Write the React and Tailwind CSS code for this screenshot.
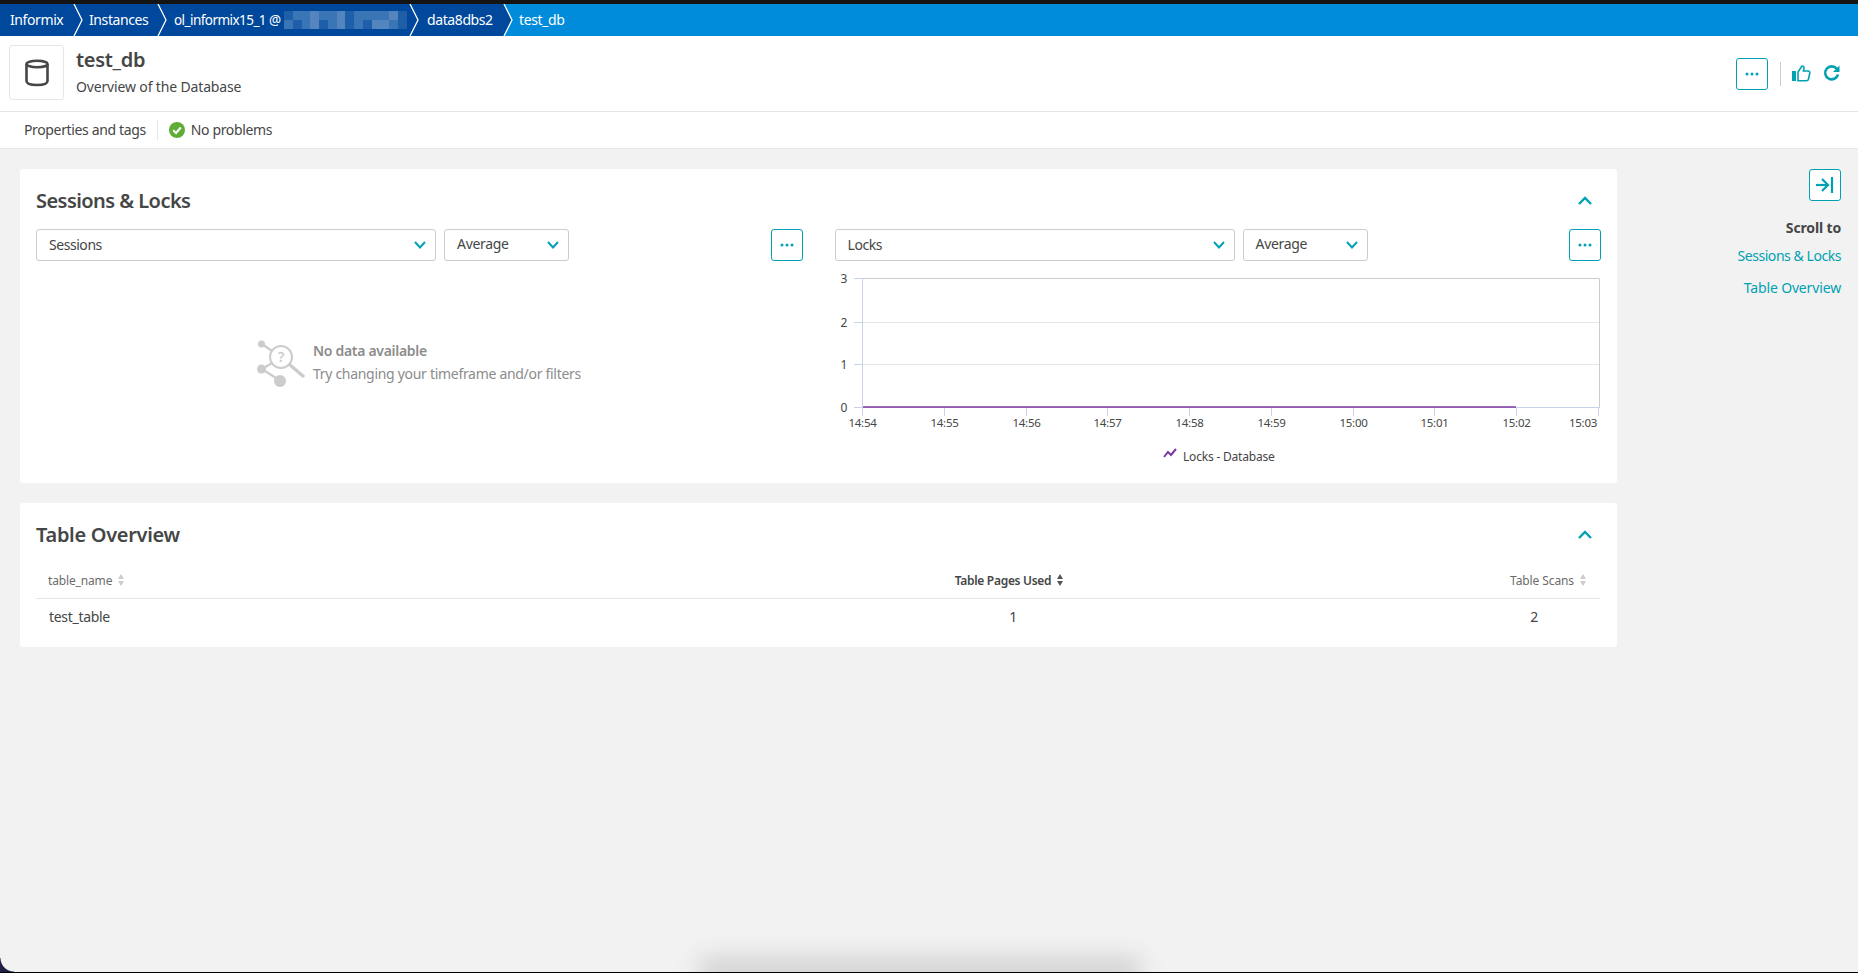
import React from "react";

const TEAL = "#00a1b2";

const D = "bg-[#1f5ea8]";
const M = "bg-[#3a75b6]";
const L = "bg-[#5485bf]";
const MASK = [
  D, M, M, L, M, M, L, D, M, M, M, M, L, D,
  M, D, M, L, D, M, L, D, M, D, L, L, M, D,
];

const Crumb = ({ children, next, width, pad }) => (
  <>
    <div className={`${width} ${pad} flex items-center text-white bg-[#00489b] shrink-0`}>{children}</div>
    <svg width="10" height="32" viewBox="0 0 10 32" className="shrink-0 block">
      <rect width="10" height="32" fill={next === "active" ? "#008cdb" : "#00489b"} />
      <polygon points="0,0 1,0 9,16 1,32 0,32" fill="#00489b" />
      <polyline points="1,0 9,16 1,32" fill="none" stroke="#fff" strokeWidth="1.3" />
    </svg>
  </>
);

const Dots = () => (
  <svg width="14" height="4" viewBox="0 0 14 4" fill={TEAL}>
    <circle cx="2" cy="2" r="1.5" />
    <circle cx="7" cy="2" r="1.5" />
    <circle cx="12" cy="2" r="1.5" />
  </svg>
);

const IconButton = ({ children }) => (
  <button className="w-8 h-8 shrink-0 flex items-center justify-center rounded-[3px] border border-[#00a1b2] bg-white">
    {children}
  </button>
);

const ChevronUp = () => (
  <svg width="14" height="9" viewBox="0 0 14 9" fill="none" stroke={TEAL} strokeWidth="2.4">
    <polyline points="1,8 7,2 13,8" />
  </svg>
);

const Select = ({ label, width, raised }) => (
  <div className={`${width} h-8 flex items-center justify-between pl-3 pr-[9px] rounded-[3px] border border-[#cccccc] bg-white shrink-0`}>
    <span className={raised ? "-mt-[3px]" : "-mt-[1px] tracking-[-0.45px]"}>{label}</span>
    <svg width="12" height="8" viewBox="0 0 12 8" fill="none" stroke={TEAL} strokeWidth="2">
      <polyline points="1,1 6,6.5 11,1" />
    </svg>
  </div>
);

const SortIcon = ({ active }) => (
  <svg width="6" height="12" viewBox="0 0 6 12" fill={active ? "#555555" : "#cccccc"} className="ml-[6px] -mt-[2px] shrink-0">
    <polygon points="3,0 6,5 0,5" />
    <polygon points="3,12 6,7 0,7" />
  </svg>
);

const Controls = ({ label }) => (
  <div className="flex items-center">
    <Select label={label} width="w-[400px]" />
    <div className="w-2" />
    <Select label="Average" width="w-[125px]" raised />
    <div className="flex-1" />
    <IconButton><Dots /></IconButton>
  </div>
);

const NoData = () => (
  <div className="mt-[78px] pl-[221px] flex gap-2 text-[#8c8c8c]">
    <svg width="48" height="48" viewBox="0 0 48 48" fill="none" className="shrink-0">
      <circle cx="4.5" cy="5" r="3.5" fill="#cccccc" />
      <line x1="5" y1="5" x2="15" y2="12" stroke="#cccccc" strokeWidth="2.2" />
      <circle cx="24" cy="18" r="11" stroke="#cccccc" strokeWidth="2" fill="#fff" />
      <text x="24" y="23" textAnchor="middle" fontSize="14" fontWeight="600" fill="#cccccc" fontFamily="Noto Sans, sans-serif">?</text>
      <line x1="33" y1="26" x2="46" y2="37" stroke="#cccccc" strokeWidth="3.4" strokeLinecap="round" />
      <line x1="15" y1="24" x2="5" y2="30" stroke="#cccccc" strokeWidth="2.2" />
      <circle cx="4.5" cy="30" r="4.5" fill="#cccccc" />
      <line x1="5" y1="30" x2="22" y2="41" stroke="#cccccc" strokeWidth="2.2" />
      <circle cx="23" cy="42" r="6" fill="#cccccc" />
    </svg>
    <div className="pt-[1px]">
      <div className="h-[23px] leading-[22px] font-semibold text-[14px]">No data available</div>
      <div className="h-[22px] leading-[22px]">Try changing your timeframe and/or filters</div>
    </div>
  </div>
);

const TICKS = [
  ["14:54", 27], ["14:55", 109], ["14:56", 191], ["14:57", 272], ["14:58", 354],
  ["14:59", 436], ["15:00", 518], ["15:01", 599], ["15:02", 681], ["15:03", 763],
];
const GRID = [["3", 17], ["2", 61], ["1", 103], ["0", 146]];

const LocksChart = () => (
  <svg width="766" height="222" viewBox="0 0 766 222" className="block" fontFamily="Noto Sans, sans-serif" fontSize="12" fill="#454646" letterSpacing="-0.3">
    <line x1="27.5" x2="27.5" y1="17" y2="146" stroke="#c9d3e8" />
    <line x1="27.5" x2="765" y1="146.500" y2="146.500" stroke="#c9d3e8" />
    <polyline points="27,17.500 764.500,17.500 764.500,146" fill="none" stroke="#cccccc" />
    {GRID.map(([label, y]) => (
      <g key={label}>
        <line x1="19" x2="28" y1={y + 0.5} y2={y + 0.5} stroke="#c9d3e8" />
        {y !== 17 && y !== 146 && <line x1="28" x2="764" y1={y + 0.5} y2={y + 0.5} stroke="#e6e6e6" />}
        <text x="12" y={y + 5} textAnchor="end">{label}</text>
      </g>
    ))}
    {TICKS.map(([label, x]) => (
      <g key={label}>
        <line x1={x + 0.5} x2={x + 0.5} y1="146" y2="155" stroke="#c9d3e8" />
        <text x={x === 763 ? 748 : x + 0.5} y="166" textAnchor="middle" fontSize="11.5">{label}</text>
      </g>
    ))}
    <line x1="28" x2="681" y1="146" y2="146" stroke="#7c38a1" strokeWidth="1.6" />
    <polyline points="329,196 333,191 336,194 341,188" fill="none" stroke="#7c38a1" strokeWidth="2" />
    <text x="348" y="200" fontSize="12" letterSpacing="-0.2">Locks - Database</text>
  </svg>
);

const CardTitle = ({ children, tight }) => (
  <div className="h-8 flex items-center justify-between">
    <h2 className={`text-[20px] font-semibold text-[#454646] ${tight ? "tracking-[-0.55px]" : "tracking-[-0.3px]"}`}>{children}</h2>
    <div className="mr-[9px] flex -mt-[2px]"><ChevronUp /></div>
  </div>
);

export default function App() {
  return (
    <div className="relative w-screen h-screen overflow-hidden flex flex-col bg-[#f2f2f2] text-[14px] text-[#454646] tracking-[-0.3px] font-['Noto_Sans',sans-serif]">
      <div className="h-1 bg-[#141414] shrink-0" />

      {/* breadcrumbs */}
      <div className="h-8 flex shrink-0 bg-[#008cdb] text-[14px] leading-8 tracking-[-0.4px]">
        <Crumb width="w-[73px]" pad="pl-[10px]">Informix</Crumb>
        <Crumb width="w-[74px]" pad="pl-[6px]">Instances</Crumb>
        <Crumb width="w-[242px]" pad="pl-[7px] text-[13.5px] tracking-[-0.55px]">
          ol_informix15_1 @
          <span className="absolute left-[284px] top-[11px] w-[123px] h-[18px] grid grid-cols-14">
            {MASK.map((shade, i) => (
              <span key={i} className={shade} />
            ))}
          </span>
        </Crumb>
        <Crumb width="w-[84px]" pad="pl-[8px]" next="active">data8dbs2</Crumb>
        <div className="pl-[6px] text-white">test_db</div>
      </div>

      {/* page header */}
      <div className="h-[76px] shrink-0 bg-white border-b border-[#e6e6e6] flex items-center pl-[9px] pr-[18px]">
        <div className="w-[55px] h-[55px] rounded-[3px] border border-[#e6e6e6] flex items-center justify-center -mt-[2px]">
          <svg width="24" height="28" viewBox="0 0 24 28" fill="none" stroke="#454646" strokeWidth="2.6">
            <ellipse cx="12" cy="5" rx="10.5" ry="3.2" />
            <path d="M1.5 5v17c0 2.5 3.5 4 10.5 4s10.500-1.500 10.500-4V5" />
          </svg>
        </div>
        <div className="ml-3 -mt-[3px]">
          <div className="text-[20px] leading-[28px] font-semibold">test_db</div>
          <div className="leading-[24px] mt-[1px] tracking-[-0.15px]">Overview of the Database</div>
        </div>
        <div className="flex-1" />
        <IconButton><Dots /></IconButton>
        <div className="ml-3 w-px h-6 bg-[#cccccc]" />
        <svg width="19" height="17" viewBox="0 0 19 17" className="ml-[11px]" fill="none">
          <rect x="0" y="6" width="4" height="10" fill={TEAL} />
          <path d="M6 7l4-6c1.500 0 2.300 1 2 2.500L11.400 6h5c1 0 1.600 1 1.400 2l-1.300 6c-.2 1-1 1.800-2 1.800H6z" stroke={TEAL} strokeWidth="1.6" />
        </svg>
        <svg width="17" height="17" viewBox="0 0 17 17" className="ml-[12px]" fill="none">
          <path d="M13.800 3.800A6.500 6.500 0 1 0 15 9.500" stroke={TEAL} strokeWidth="2.6" />
          <polygon points="10,7 16.500,7 16.500,0.500" fill={TEAL} />
        </svg>
      </div>

      {/* sub bar */}
      <div className="h-[37px] shrink-0 bg-white border-b border-[#e6e6e6] flex items-center pl-6 tracking-[-0.36px]">
        <span className="-mt-[1px]">Properties and tags</span>
        <div className="mx-[11px] w-px h-5 bg-[#e6e6e6]" />
        <svg width="16" height="16" viewBox="0 0 16 16">
          <circle cx="8" cy="8" r="8" fill="#5ead35" />
          <polyline points="4.200,8.300 7,11 11.800,5.500" fill="none" stroke="#fff" strokeWidth="2" />
        </svg>
        <span className="ml-[6px] -mt-[1px]">No problems</span>
      </div>

      {/* content */}
      <div className="flex-1 flex pl-5 pt-5 pr-[17px] min-h-0">
        <div className="w-[1597px] shrink-0 flex flex-col gap-5">
          <section className="h-[314px] bg-white rounded-[3px] pt-4 px-4">
            <CardTitle tight>Sessions &amp; Locks</CardTitle>
            <div className="mt-3 grid grid-cols-2 gap-8">
              <div>
                <Controls label="Sessions" />
                <NoData />
              </div>
              <div>
                <Controls label="Locks" />
                <LocksChart />
              </div>
            </div>
          </section>

          <section className="h-[144px] bg-white rounded-[3px] pt-4 px-4">
            <CardTitle>Table Overview</CardTitle>
            <div className="grid grid-cols-[854px_246px_1fr] w-[1564px] h-[48px] items-center border-b border-[#e6e6e6] text-[12px] pt-[13px]">
              <div className="flex items-center pl-3 text-[#6b6b6b] tracking-[-0.15px]">table_name<SortIcon /></div>
              <div className="flex items-center justify-center pr-2 font-semibold">Table Pages Used<SortIcon active /></div>
              <div className="flex items-center justify-end pr-[14px] text-[#6b6b6b] tracking-[-0.1px]">Table Scans<SortIcon /></div>
            </div>
            <div className="grid grid-cols-[854px_246px_1fr] w-[1564px] h-[36px] items-center -mt-[1px]">
              <div className="pl-[13px]">test_table</div>
              <div className="text-center">1</div>
              <div className="text-right pr-[62px]">2</div>
            </div>
          </section>
        </div>

        {/* scroll-to rail */}
        <div className="flex-1 flex flex-col items-end">
          <IconButton>
            <svg width="18" height="16" viewBox="0 0 18 16" fill="none" stroke={TEAL} strokeWidth="2.200">
              <line x1="0" y1="8" x2="11" y2="8" />
              <polyline points="6,2 12,8 6,14" />
              <line x1="16" y1="0" x2="16" y2="16" />
            </svg>
          </IconButton>
          <div className="mt-[17px] leading-[20px] font-bold text-[14px] tracking-[-0.15px]">Scroll to</div>
          <div className="mt-[8px] leading-[20px] text-[#00a1b2] tracking-[-0.45px]">Sessions &amp; Locks</div>
          <div className="mt-[12px] leading-[20px] text-[#00a1b2] tracking-[-0.15px]">Table Overview</div>
        </div>
      </div>

      {/* window edge: dock shadow, corner, bottom line */}
      <div className="absolute -bottom-[10px] left-[700px] w-[440px] h-[24px] bg-[#cdcdcd] blur-[12px]" />
      <div className="absolute bottom-[1px] left-0 w-[14px] h-[14px] bg-[radial-gradient(circle_at_100%_0%,transparent_13px,#1f1f45_14px)]" />
      <div className="absolute bottom-0 left-0 right-0 h-px bg-black" />
    </div>
  );
}
